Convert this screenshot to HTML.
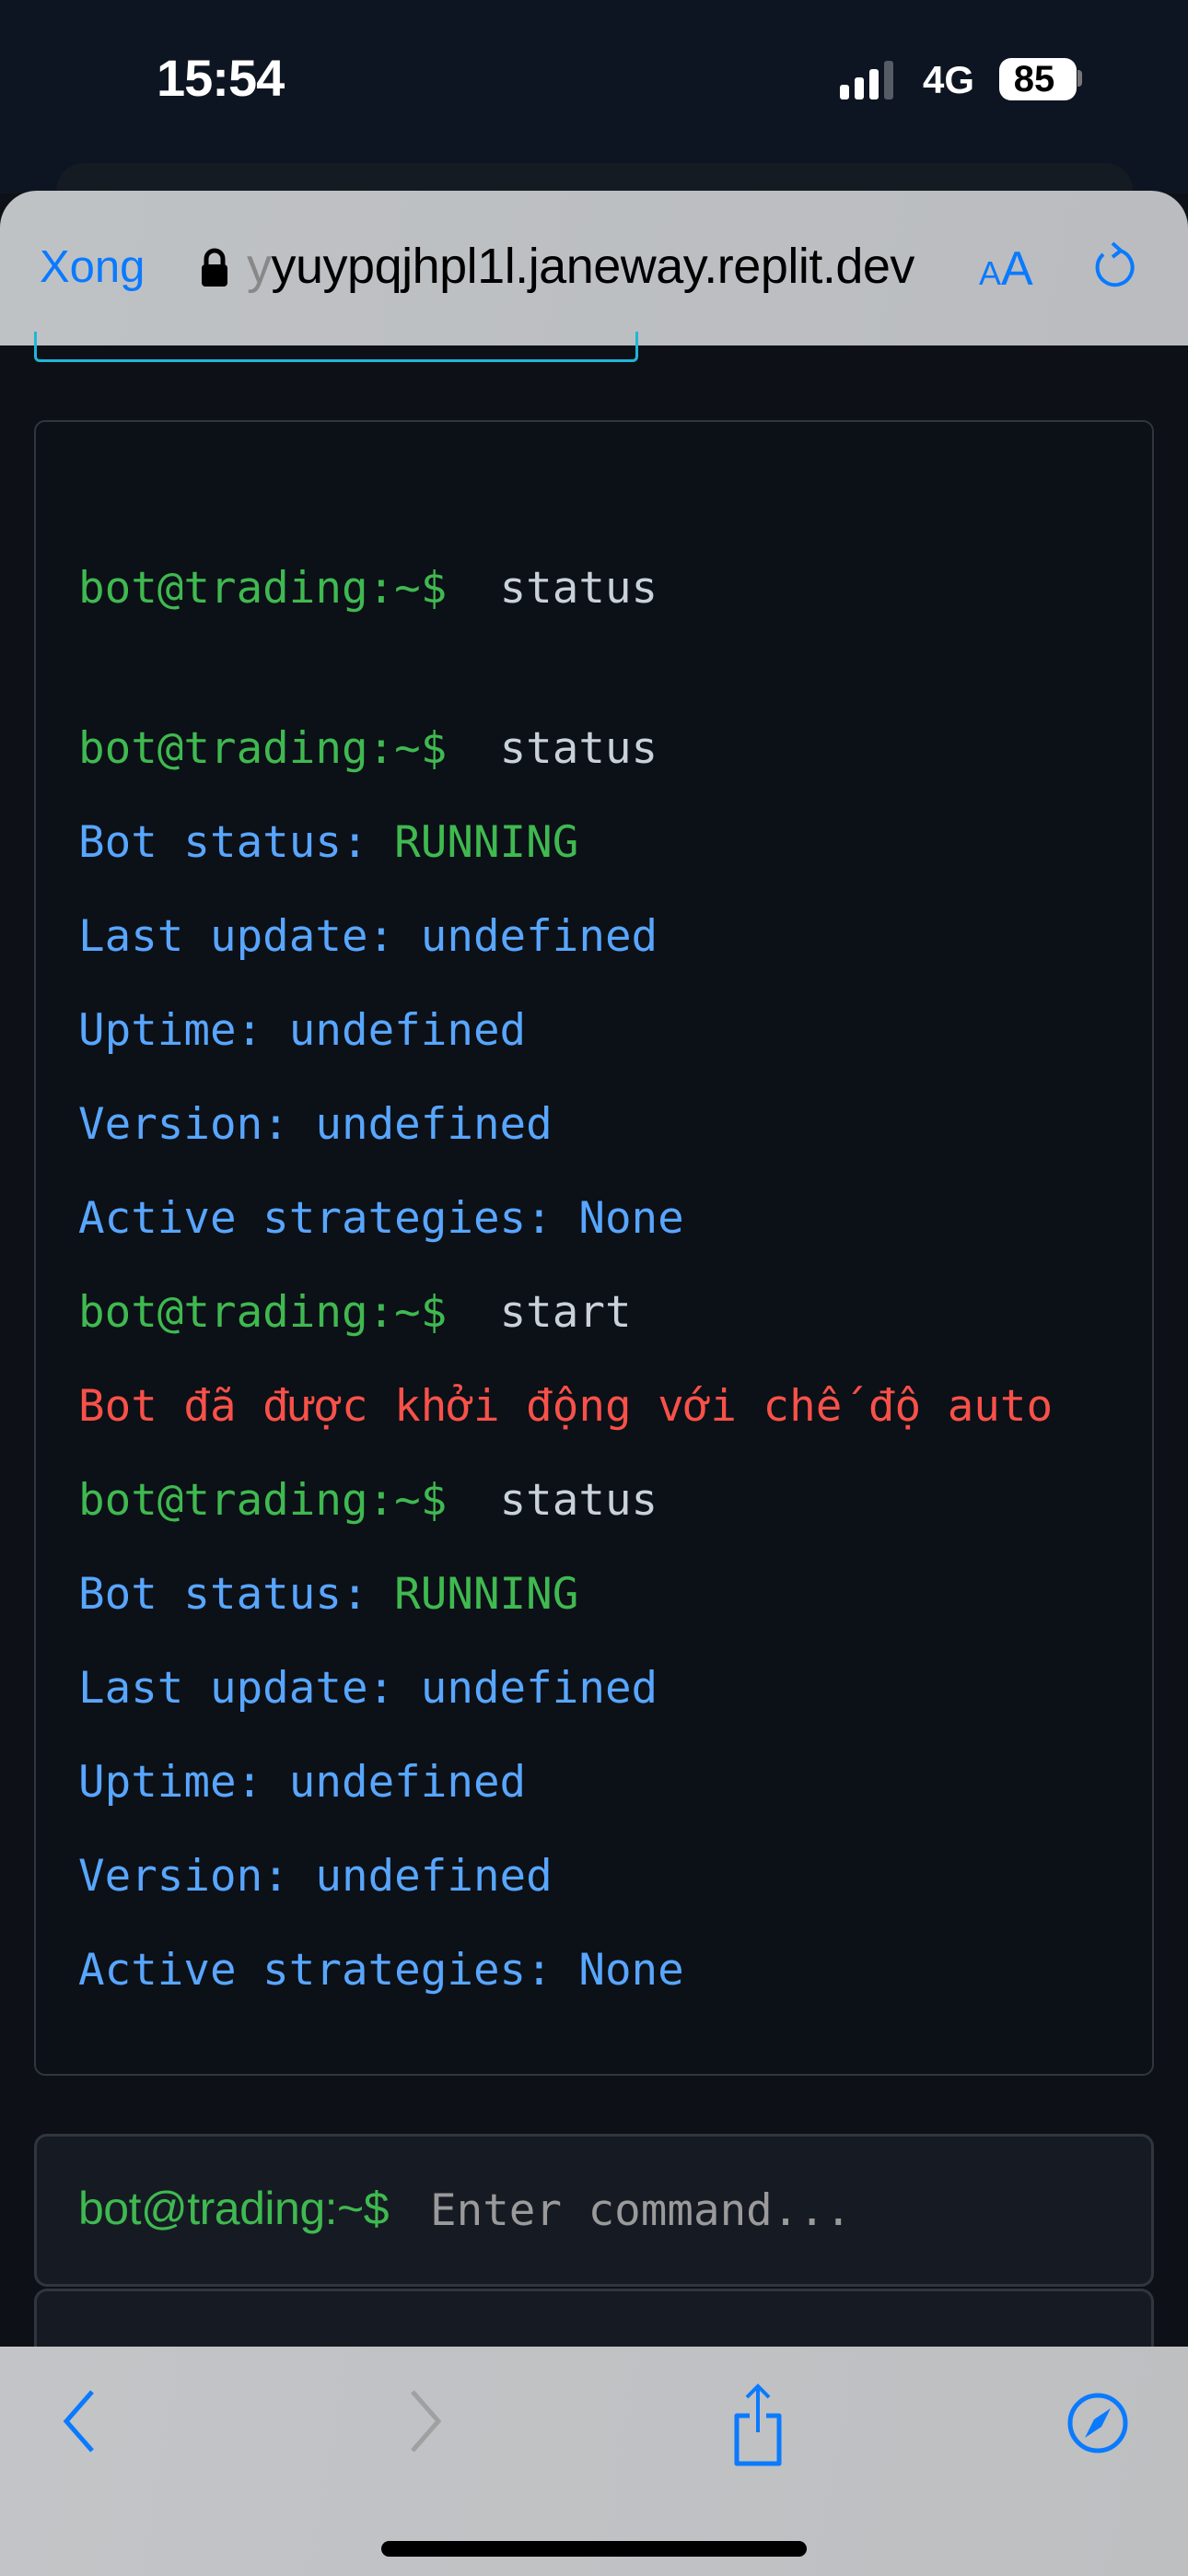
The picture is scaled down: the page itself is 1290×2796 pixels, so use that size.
<!DOCTYPE html>
<html><head><meta charset="utf-8"><style>
*{margin:0;padding:0;box-sizing:border-box}
body{width:1290px;height:2796px;background:#0d1117;position:relative;overflow:hidden;font-family:"Liberation Sans",sans-serif}
.abs{position:absolute}
.mono{font-family:"DejaVu Sans Mono","Liberation Mono",monospace;font-size:47.5px;white-space:pre}
.g{color:#3fb950}.b{color:#58a6ff}.r{color:#f85149}.w{color:#c9d1d9}
.line{position:absolute;left:85px;line-height:60px}
</style></head><body>
<div class="abs" style="left:0;top:0;width:1290px;height:210px;background:#0e1522"></div>
<div class="abs" style="left:170px;top:52px;color:#fff;font-size:56px;font-weight:bold;letter-spacing:-1px">15:54</div>
<svg class="abs" style="left:912px;top:66px" width="70" height="42"><rect x="0" y="26" width="10" height="16" rx="3" fill="#fff"/><rect x="16" y="18" width="10" height="24" rx="3" fill="#fff"/><rect x="32" y="9" width="10" height="33" rx="3" fill="#fff"/><rect x="48" y="0" width="10" height="42" rx="3" fill="#555c66"/></svg>
<div class="abs" style="left:1002px;top:63px;color:#fff;font-size:42px;font-weight:bold">4G</div>
<div class="abs" style="left:1085px;top:63px;width:84px;height:46px;border-radius:13px;background:#fff;color:#000;font-size:40px;font-weight:bold;text-align:center;line-height:46px;padding-right:8px">85</div>
<div class="abs" style="left:1170px;top:76px;width:5px;height:18px;border-radius:0 4px 4px 0;background:#777"></div>
<div class="abs" style="left:61px;top:177px;width:1169px;height:60px;border-radius:30px 30px 0 0;background:#151b23"></div>
<div class="abs" style="left:0;top:207px;width:1290px;height:168px;border-radius:40px 40px 0 0;background:linear-gradient(100deg,#bfc2c5,#babcbf)"></div>
<div class="abs" style="left:43px;top:262px;color:#0a7aff;font-size:49px">Xong</div>
<svg class="abs" style="left:218px;top:268px" width="30" height="44"><path d="M6 20V13a9 9 0 0 1 18 0v7" stroke="#000" stroke-width="5" fill="none"/><rect x="1" y="19" width="28" height="24" rx="4" fill="#000"/></svg>
<div class="abs" style="left:268px;top:258px;color:#000;font-size:54px;letter-spacing:-0.5px"><span style="color:#888">y</span>yuypqjhpl1l.janeway.replit.dev</div>
<div class="abs" style="left:1063px;top:262px;color:#0a7aff;font-size:52px"><span style="font-size:36px">A</span>A</div>
<svg class="abs" style="left:1186px;top:262px" width="48" height="56"><path d="M30 10 A19 19 0 1 1 12 14" stroke="#0a7aff" stroke-width="4" fill="none"/><path d="M22 2 L31 10 L22 17" stroke="#0a7aff" stroke-width="4" fill="none"/></svg>
<div class="abs" style="left:37px;top:360px;width:656px;height:33px;border:3px solid #1fb6d8;border-top:none;border-radius:0 0 6px 6px"></div>
<div class="abs" style="left:37px;top:456px;width:1216px;height:1797px;border:2px solid #30363d;border-radius:12px;background:#0c1017"></div>
<div class="mono">
<div class="line" style="top:609px"><span class="g">bot@trading:~$</span><span class="w">  status</span></div>
<div class="line" style="top:783px"><span class="g">bot@trading:~$</span><span class="w">  status</span></div>
<div class="line b" style="top:885px">Bot status: <span class="g">RUNNING</span></div>
<div class="line b" style="top:987px">Last update: undefined</div>
<div class="line b" style="top:1089px">Uptime: undefined</div>
<div class="line b" style="top:1191px">Version: undefined</div>
<div class="line b" style="top:1293px">Active strategies: None</div>
<div class="line" style="top:1395px"><span class="g">bot@trading:~$</span><span class="w">  start</span></div>
<div class="line r" style="top:1497px">Bot đã được khởi động với chế độ auto</div>
<div class="line" style="top:1599px"><span class="g">bot@trading:~$</span><span class="w">  status</span></div>
<div class="line b" style="top:1701px">Bot status: <span class="g">RUNNING</span></div>
<div class="line b" style="top:1803px">Last update: undefined</div>
<div class="line b" style="top:1905px">Uptime: undefined</div>
<div class="line b" style="top:2007px">Version: undefined</div>
<div class="line b" style="top:2109px">Active strategies: None</div>
</div>
<div class="abs" style="left:37px;top:2316px;width:1216px;height:166px;border:3px solid #30363d;border-radius:14px;background:#161b23"></div>
<div class="abs" style="left:85px;top:2368px;color:#3fb950;font-size:50px;letter-spacing:-0.5px">bot@trading:~$</div>
<div class="abs mono" style="left:467px;top:2370px;color:#9a9a9a;line-height:60px">Enter command...</div>
<div class="abs" style="left:37px;top:2484px;width:1216px;height:120px;border:3px solid #30363d;border-bottom:none;border-radius:14px 14px 0 0;background:#161b23"></div>
<div class="abs" style="left:0;top:2547px;width:1290px;height:249px;background:linear-gradient(100deg,#c2c4c7,#bdbfc1)"></div>
<svg class="abs" style="left:64px;top:2590px" width="50" height="80"><path d="M36 6 L8 38 L36 70" stroke="#0a7aff" stroke-width="5" fill="none"/></svg>
<svg class="abs" style="left:440px;top:2590px" width="50" height="80"><path d="M8 6 L36 38 L8 70" stroke="#a0a0a0" stroke-width="5" fill="none"/></svg>
<svg class="abs" style="left:792px;top:2584px" width="62" height="100"><path d="M31 56V6 M19 18 L31 6 L43 18" stroke="#0a7aff" stroke-width="4" fill="none"/><path d="M22 38H8V90H54V38H40" stroke="#0a7aff" stroke-width="5" fill="none" stroke-linejoin="round"/></svg>
<svg class="abs" style="left:1158px;top:2596px" width="68" height="68"><circle cx="34" cy="34" r="30" stroke="#0a7aff" stroke-width="5" fill="none"/><path d="M48 18 L38 38 L20 50 L30 30 Z" fill="#0a7aff"/></svg>
<div class="abs" style="left:414px;top:2758px;width:462px;height:17px;border-radius:9px;background:#000"></div>
</body></html>
